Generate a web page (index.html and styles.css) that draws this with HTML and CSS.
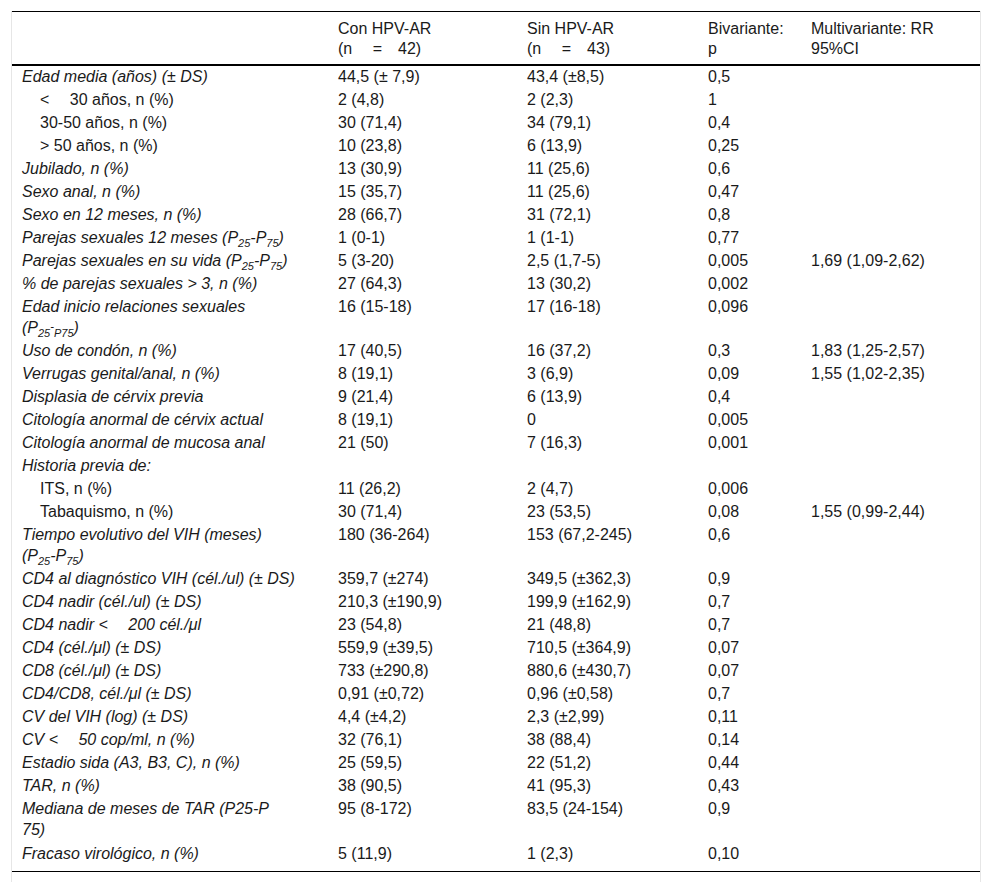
FILE: index.html
```html
<!DOCTYPE html>
<html lang="es">
<head>
<meta charset="utf-8">
<title>Tabla</title>
<link rel="stylesheet" href="styles.css">
</head>
<body>
<div class="frame">
<table class="data">
<colgroup>
<col class="c1"><col class="c2"><col class="c3"><col class="c4"><col class="c5">
</colgroup>
<thead>
<tr>
<th></th>
<th>Con HPV-AR<br>(n&emsp;&nbsp;=&emsp;42)</th>
<th>Sin HPV-AR<br>(n&emsp;&nbsp;=&emsp;43)</th>
<th>Bivariante:<br>p</th>
<th>Multivariante: RR<br>95%CI</th>
</tr>
</thead>
<tbody>
<tr><td class="lab">Edad media (años) (± DS)</td><td>44,5 (± 7,9)</td><td>43,4 (±8,5)</td><td>0,5</td><td></td></tr>
<tr><td class="sub">&lt;&emsp;&nbsp;30 años, n (%)</td><td>2 (4,8)</td><td>2 (2,3)</td><td>1</td><td></td></tr>
<tr><td class="sub">30-50 años, n (%)</td><td>30 (71,4)</td><td>34 (79,1)</td><td>0,4</td><td></td></tr>
<tr><td class="sub">&gt; 50 años, n (%)</td><td>10 (23,8)</td><td>6 (13,9)</td><td>0,25</td><td></td></tr>
<tr><td class="lab">Jubilado, n (%)</td><td>13 (30,9)</td><td>11 (25,6)</td><td>0,6</td><td></td></tr>
<tr><td class="lab">Sexo anal, n (%)</td><td>15 (35,7)</td><td>11 (25,6)</td><td>0,47</td><td></td></tr>
<tr><td class="lab">Sexo en 12 meses, n (%)</td><td>28 (66,7)</td><td>31 (72,1)</td><td>0,8</td><td></td></tr>
<tr><td class="lab">Parejas sexuales 12 meses (P<sub>25</sub>-P<sub>75</sub>)</td><td>1 (0-1)</td><td>1 (1-1)</td><td>0,77</td><td></td></tr>
<tr><td class="lab">Parejas sexuales en su vida (P<sub>25</sub>-P<sub>75</sub>)</td><td>5 (3-20)</td><td>2,5 (1,7-5)</td><td>0,005</td><td>1,69 (1,09-2,62)</td></tr>
<tr><td class="lab">% de parejas sexuales &gt; 3, n (%)</td><td>27 (64,3)</td><td>13 (30,2)</td><td>0,002</td><td></td></tr>
<tr><td class="lab">Edad inicio relaciones sexuales<br>(P<sub>25</sub><sup>-</sup><sub>P75</sub>)</td><td>16 (15-18)</td><td>17 (16-18)</td><td>0,096</td><td></td></tr>
<tr><td class="lab">Uso de condón, n (%)</td><td>17 (40,5)</td><td>16 (37,2)</td><td>0,3</td><td>1,83 (1,25-2,57)</td></tr>
<tr><td class="lab">Verrugas genital/anal, n (%)</td><td>8 (19,1)</td><td>3 (6,9)</td><td>0,09</td><td>1,55 (1,02-2,35)</td></tr>
<tr><td class="lab">Displasia de cérvix previa</td><td>9 (21,4)</td><td>6 (13,9)</td><td>0,4</td><td></td></tr>
<tr><td class="lab">Citología anormal de cérvix actual</td><td>8 (19,1)</td><td>0</td><td>0,005</td><td></td></tr>
<tr><td class="lab">Citología anormal de mucosa anal</td><td>21 (50)</td><td>7 (16,3)</td><td>0,001</td><td></td></tr>
<tr><td class="lab">Historia previa de:</td><td></td><td></td><td></td><td></td></tr>
<tr><td class="sub">ITS, n (%)</td><td>11 (26,2)</td><td>2 (4,7)</td><td>0,006</td><td></td></tr>
<tr><td class="sub">Tabaquismo, n (%)</td><td>30 (71,4)</td><td>23 (53,5)</td><td>0,08</td><td>1,55 (0,99-2,44)</td></tr>
<tr><td class="lab">Tiempo evolutivo del VIH (meses)<br>(P<sub>25</sub>-P<sub>75</sub>)</td><td>180 (36-264)</td><td>153 (67,2-245)</td><td>0,6</td><td></td></tr>
<tr><td class="lab">CD4 al diagnóstico VIH (cél./ul) (± DS)</td><td>359,7 (±274)</td><td>349,5 (±362,3)</td><td>0,9</td><td></td></tr>
<tr><td class="lab">CD4 nadir (cél./ul) (± DS)</td><td>210,3 (±190,9)</td><td>199,9 (±162,9)</td><td>0,7</td><td></td></tr>
<tr><td class="lab">CD4 nadir &lt;&emsp;&nbsp;200 cél./μl</td><td>23 (54,8)</td><td>21 (48,8)</td><td>0,7</td><td></td></tr>
<tr><td class="lab">CD4 (cél./μl) (± DS)</td><td>559,9 (±39,5)</td><td>710,5 (±364,9)</td><td>0,07</td><td></td></tr>
<tr><td class="lab">CD8 (cél./μl) (± DS)</td><td>733 (±290,8)</td><td>880,6 (±430,7)</td><td>0,07</td><td></td></tr>
<tr><td class="lab">CD4/CD8, cél./μl (± DS)</td><td>0,91 (±0,72)</td><td>0,96 (±0,58)</td><td>0,7</td><td></td></tr>
<tr><td class="lab">CV del VIH (log) (± DS)</td><td>4,4 (±4,2)</td><td>2,3 (±2,99)</td><td>0,11</td><td></td></tr>
<tr><td class="lab">CV &lt;&emsp;&nbsp;50 cop/ml, n (%)</td><td>32 (76,1)</td><td>38 (88,4)</td><td>0,14</td><td></td></tr>
<tr><td class="lab">Estadio sida (A3, B3, C), n (%)</td><td>25 (59,5)</td><td>22 (51,2)</td><td>0,44</td><td></td></tr>
<tr><td class="lab">TAR, n (%)</td><td>38 (90,5)</td><td>41 (95,3)</td><td>0,43</td><td></td></tr>
<tr><td class="lab">Mediana de meses de TAR (P25-P<br>75)</td><td>95 (8-172)</td><td>83,5 (24-154)</td><td>0,9</td><td></td></tr>
<tr class="last"><td class="lab">Fracaso virológico, n (%)</td><td>5 (11,9)</td><td>1 (2,3)</td><td>0,10</td><td></td></tr>
</tbody>
</table>
</div>
</body>
</html>
```

FILE: styles.css
```css
html, body {
  margin: 0;
  padding: 0;
  background: #fff;
}

body {
  font-family: "Liberation Sans", Arial, sans-serif;
  font-size: 16px;
  color: #1a1a1a;
}

.frame {
  margin: 11px 11px 0 11px;
  padding-bottom: 20px;
  border-left: 1px solid #e6e6e6;
  border-right: 1px solid #e6e6e6;
}

.data {
  width: 100%;
  border-collapse: collapse;
  table-layout: fixed;
  border-top: 1px solid #000;
  border-bottom: 1px solid #000;
}

.c1 { width: 320px; }
.c2 { width: 189px; }
.c3 { width: 181px; }
.c4 { width: 103px; }
.c5 { width: auto; }

.data th {
  font-weight: normal;
  text-align: left;
  vertical-align: top;
  line-height: 20px;
  padding: 7px 6px 5px 6px;
  border-bottom: 2px solid #000;
}

.data td {
  vertical-align: top;
  line-height: 21px;
  padding: 0 6px 2px 6px;
}

.data tr.last td {
  padding-top: 1px;
  padding-bottom: 7px;
}

.data th:first-child,
.data td:first-child {
  padding-left: 10px;
}

.data td.lab {
  font-style: italic;
}

.data td.sub {
  padding-left: 28px;
}

sub, sup {
  font-size: 11px;
  line-height: 0;
  position: relative;
  vertical-align: baseline;
}

sub { top: 4px; }
sup { top: -3px; }
```
